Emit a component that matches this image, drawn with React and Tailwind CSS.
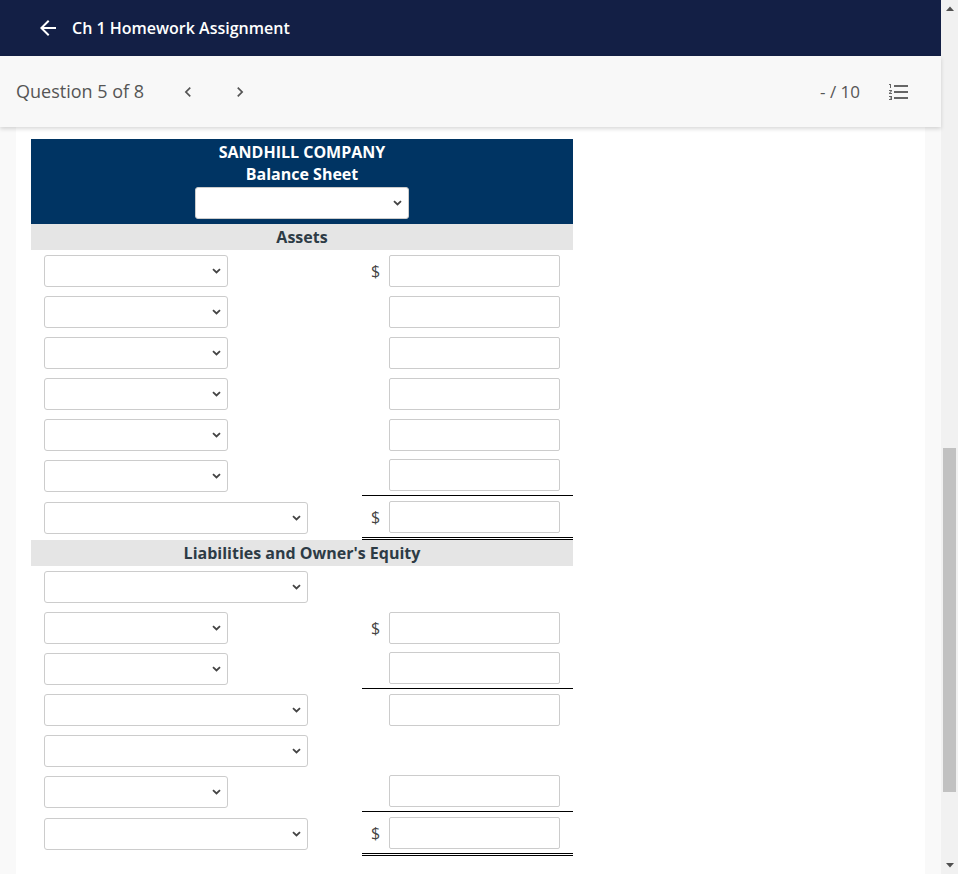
import clsx from 'clsx'
import { MdArrowBack, MdChevronLeft, MdChevronRight, MdFormatListNumbered } from 'react-icons/md'

const Chevron = () => (
  <svg width="9" height="6" viewBox="0 0 9 6" className="text-[#444]">
    <path d="M1 1.2l3.5 3.3L8 1.2" fill="none" stroke="currentColor" strokeWidth="1.8" />
  </svg>
)

const Select = ({ className }) => (
  <div
    className={clsx(
      'flex h-8 items-center justify-end rounded-[3px] border border-[#cccccc] bg-white pr-[6px]',
      className
    )}
  >
    <Chevron />
  </div>
)

const Row = ({ wide, dollar, input = true, line }) => (
  <div className={clsx('flex', line === 'double' ? 'h-[44px]' : 'h-[41px]')}>
    <div className="flex w-[331px] items-center pl-[13px]">
      <Select className={wide ? 'w-[264px]' : 'w-[184px]'} />
    </div>
    <div
      className={clsx(
        'flex w-[211px] items-center',
        line === 'single' && 'border-b border-black',
        line === 'double' && 'border-b-[3px] border-double border-black'
      )}
    >
      <span className="w-[27px] text-center text-[16px] text-[#444]">{dollar ? '$' : ''}</span>
      {input && <div className="h-8 w-[171px] rounded-[2px] border border-[#cccccc] bg-white" />}
    </div>
  </div>
)

const SectionBar = ({ children }) => (
  <div className="flex h-[26px] items-center justify-center bg-[#e5e5e5] text-[16px] font-bold text-[#2d3b45]">
    {children}
  </div>
)

const BalanceSheet = () => (
  <div className="w-[542px]">
    <div className="flex flex-col items-center bg-[#003463] pb-[5px] pt-[2px] text-[16px] font-bold leading-[22px] text-white">
      <div>SANDHILL COMPANY</div>
      <div>Balance Sheet</div>
      <Select className="mt-[2px] w-[214px]" />
    </div>
    <SectionBar>Assets</SectionBar>
    <Row dollar />
    <Row />
    <Row />
    <Row />
    <Row />
    <Row line="single" />
    <Row wide dollar line="double" />
    <SectionBar>Liabilities and Owner's Equity</SectionBar>
    <Row wide input={false} />
    <Row dollar />
    <Row line="single" />
    <Row wide />
    <Row wide input={false} />
    <Row line="single" />
    <Row wide dollar line="double" />
  </div>
)

const Scrollbar = () => (
  <div className="flex h-full w-[17px] flex-col bg-[#f1f1f1]">
    <div className="flex h-[17px] items-center justify-center">
      <svg width="8" height="5" viewBox="0 0 8 5">
        <path d="M0 5L4 0.5L8 5z" fill="#505050" />
      </svg>
    </div>
    <div className="mx-[2px] mt-[431px] h-[344px] bg-[#c1c1c1]" />
    <div className="flex-1" />
    <div className="flex h-[17px] items-center justify-center">
      <svg width="8" height="5" viewBox="0 0 8 5">
        <path d="M0 0L4 4.5L8 0z" fill="#505050" />
      </svg>
    </div>
  </div>
)

export default function App() {
  return (
    <div className="flex h-[874px] w-[958px] overflow-hidden font-['Open_Sans',sans-serif]">
      <div className="flex w-[941px] flex-col">
        <header className="flex h-14 shrink-0 items-center bg-[#131f45] pl-[36px] text-white">
          <MdArrowBack size={24} />
          <span className="ml-3 text-[16px] font-semibold">Ch 1 Homework Assignment</span>
        </header>
        <div className="relative z-10 flex h-[71px] shrink-0 items-center bg-[#f8f8f8] pl-4 pr-[30px] text-[#555] shadow-[0_2px_4px_rgba(0,0,0,0.15)]">
          <span className="text-[18px]">Question 5 of 8</span>
          <MdChevronLeft size={20} className="ml-[34px]" />
          <MdChevronRight size={20} className="ml-[32px]" />
          <span className="ml-auto text-[17px]">- / 10</span>
          <MdFormatListNumbered size={24} className="ml-[27px] text-[#666]" />
        </div>
        <div className="flex-1 bg-[#f9f9f9] px-4">
          <div className="h-full bg-white pl-[15px] pt-3">
            <BalanceSheet />
          </div>
        </div>
      </div>
      <Scrollbar />
    </div>
  )
}
